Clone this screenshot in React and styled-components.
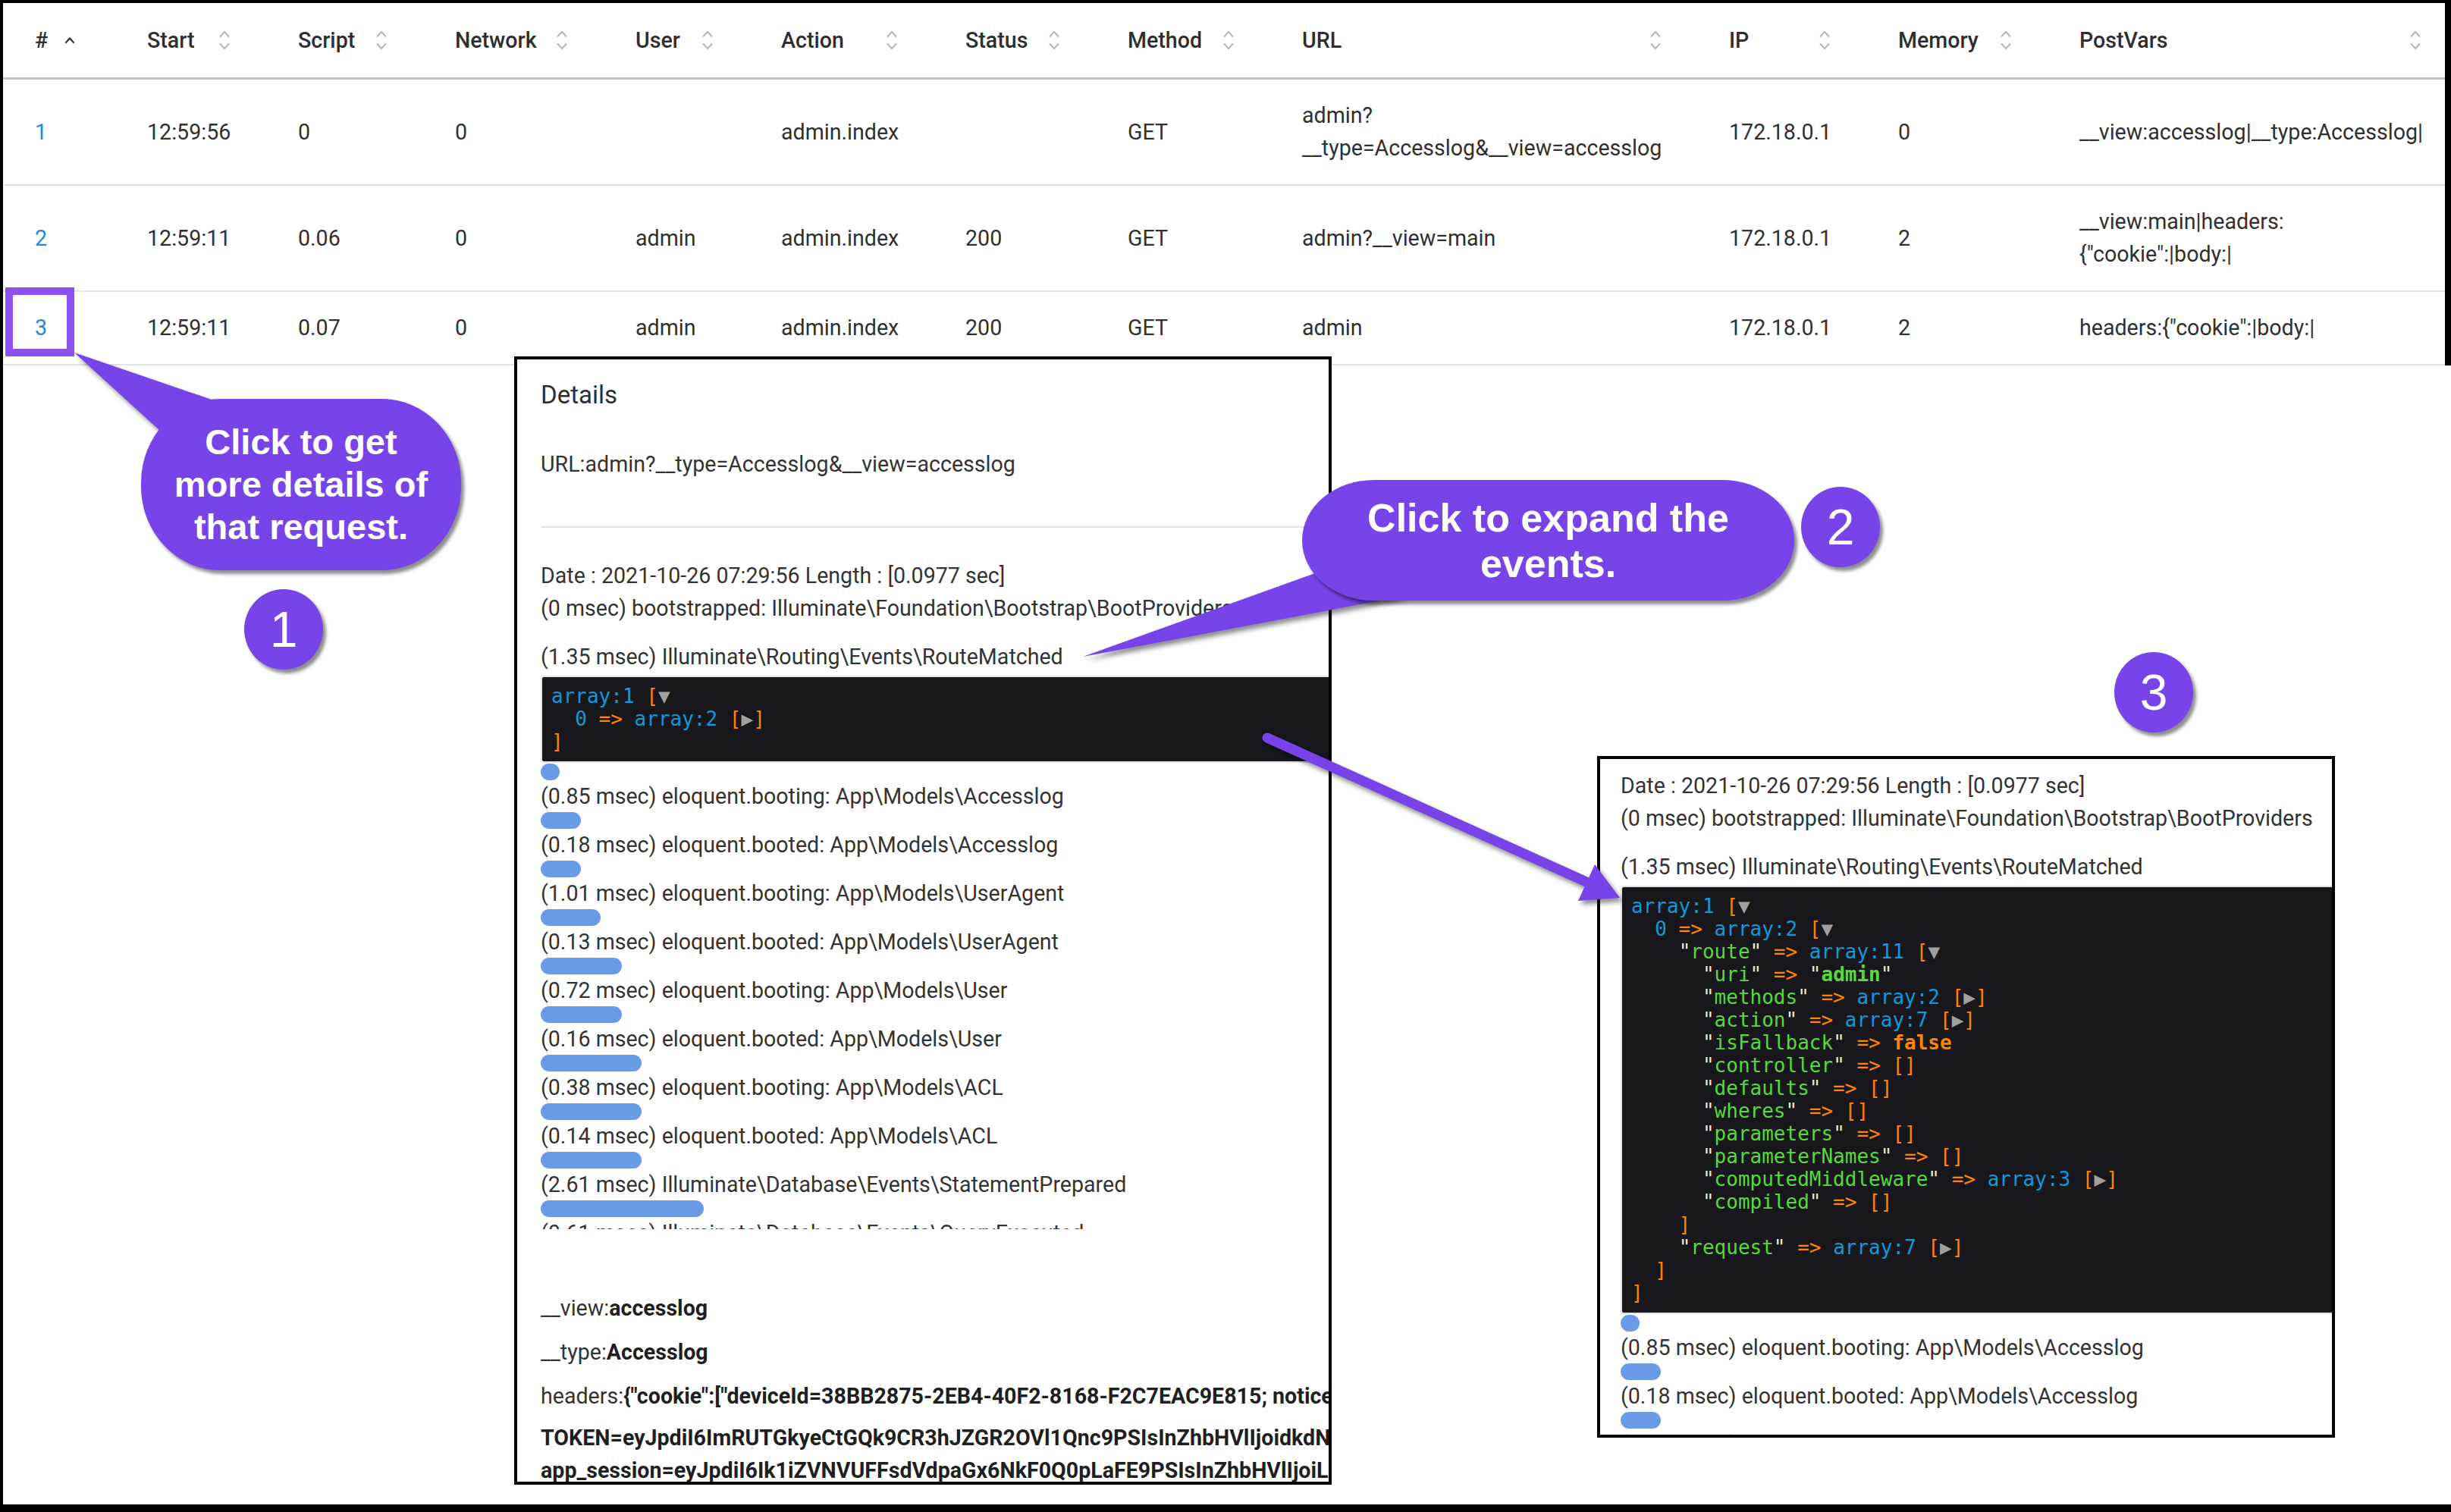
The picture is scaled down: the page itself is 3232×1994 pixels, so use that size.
import React from "react";
import styled, { createGlobalStyle } from "styled-components";

const PURPLE = "#7744ea";
const TEXT_SIZE = "28.6px";

const GlobalStyle = createGlobalStyle`
  html, body { margin: 0; padding: 0; background: #fff; }
  body { font-family: Roboto, "Liberation Sans", Arial, sans-serif; }
`;

const Frame = styled.div`
  position: relative;
  box-sizing: border-box;
  width: 3232px;
  height: 1994px;
  border-top: 4px solid #000;
  border-left: 4px solid #000;
  border-bottom: 10px solid #000;
  background: #fff;
  overflow: hidden;
`;

/* ---------- request table ---------- */

const COLS =
  "148px 199px 207px 238px 192px 243px 214px 230px 563px 223px 239px 540px";

const TableWrap = styled.div`
  width: 3220px;
  overflow: hidden;
  border-right: 8px solid #000;
`;

const HeadRow = styled.div`
  display: grid;
  grid-template-columns: ${COLS};
  height: 98px;
  border-bottom: 3px solid #c4c4c4;
`;

const HeadCell = styled.div`
  display: flex;
  align-items: center;
  justify-content: ${(p) => (p.$sorted ? "flex-start" : "space-between")};
  gap: 22px;
  padding: 0 48px 0 42px;
  font-size: ${TEXT_SIZE};
  font-weight: 500;
  color: #2e2e2e;
  white-space: nowrap;
`;

const Row = styled.div`
  display: grid;
  grid-template-columns: ${COLS};
  border-bottom: 2px solid #e2e2e2;
`;

const Cell = styled.div`
  display: flex;
  align-items: center;
  padding: 26px ${(p) => (p.$last ? "20px" : "42px")} 26px 42px;
  font-size: ${TEXT_SIZE};
  line-height: 43px;
  white-space: nowrap;
  color: ${(p) => (p.$link ? "#1e86e3" : "#303030")};
`;

const SortIcon = () => (
  <svg width="14" height="28" viewBox="0 0 14 28" fill="none" stroke="#b5b5b5"
    strokeWidth="2" strokeLinecap="round" strokeLinejoin="round">
    <polyline points="1.5,9 7,3 12.5,9" />
    <polyline points="1.5,19 7,25 12.5,19" />
  </svg>
);

const AscIcon = () => (
  <svg width="14" height="10" viewBox="0 0 14 10" fill="none" stroke="#333"
    strokeWidth="2.2" strokeLinecap="round" strokeLinejoin="round">
    <polyline points="2,8 7,2.5 12,8" />
  </svg>
);

const HEADERS = ["#", "Start", "Script", "Network", "User", "Action", "Status",
  "Method", "URL", "IP", "Memory", "PostVars"];

const ROWS = [
  {
    id: 1, start: "12:59:56", script: "0", network: "0", user: "", action: "admin.index",
    status: "", method: "GET", url: ["admin?", "__type=Accesslog&__view=accesslog"],
    ip: "172.18.0.1", memory: "0", post: ["__view:accesslog|__type:Accesslog|"],
  },
  {
    id: 2, start: "12:59:11", script: "0.06", network: "0", user: "admin", action: "admin.index",
    status: "200", method: "GET", url: ["admin?__view=main"],
    ip: "172.18.0.1", memory: "2", post: ["__view:main|headers:", "{\"cookie\":|body:|"],
  },
  {
    id: 3, start: "12:59:11", script: "0.07", network: "0", user: "admin", action: "admin.index",
    status: "200", method: "GET", url: ["admin"],
    ip: "172.18.0.1", memory: "2", post: ["headers:{\"cookie\":|body:|"],
  },
];

/* wrapped cell values: the lines break where the original column wrapped them */
const Lines = ({ parts }) => (
  <span>
    {parts.map((p, i) => (
      <React.Fragment key={i}>
        {i > 0 && <br />}
        {p}
      </React.Fragment>
    ))}
  </span>
);

const RequestTable = () => (
  <TableWrap>
    <HeadRow>
      {HEADERS.map((h, i) => (
        <HeadCell key={h} $sorted={i === 0}>
          <span>{h}</span>
          {i === 0 ? <AscIcon /> : <SortIcon />}
        </HeadCell>
      ))}
    </HeadRow>
    {ROWS.map((r) => (
      <Row key={r.id}>
        <Cell $link>{r.id}</Cell>
        <Cell>{r.start}</Cell>
        <Cell>{r.script}</Cell>
        <Cell>{r.network}</Cell>
        <Cell>{r.user}</Cell>
        <Cell>{r.action}</Cell>
        <Cell>{r.status}</Cell>
        <Cell>{r.method}</Cell>
        <Cell><Lines parts={r.url} /></Cell>
        <Cell>{r.ip}</Cell>
        <Cell>{r.memory}</Cell>
        <Cell $last><Lines parts={r.post} /></Cell>
      </Row>
    ))}
  </TableWrap>
);

/* ---------- event log (shared by the popup and the inset) ---------- */

const TOKEN_COLORS = {
  n: "#1299da",
  p: "#ff8400",
  g: "#a0a0a0",
  k: "#56db3a",
  s: "#56db3a",
  c: "#ff8400",
  q: "#ece7d2",
};

const Tok = styled.span`
  color: ${(p) => TOKEN_COLORS[p.$k]};
  font-weight: ${(p) => (p.$k === "s" || p.$k === "c" ? 700 : 400)};
`;

const Dump = styled.pre`
  margin: 4px -40px 0 0;
  padding: 10px 12px 11px;
  background: #18171b;
  border: 2px solid #e2e2e2;
  border-right: none;
  border-radius: 4px 0 0 4px;
  font-family: "DejaVu Sans Mono", "Liberation Mono", monospace;
  font-size: 26px;
  line-height: 30px;
  color: #ff8400;
  white-space: pre;
`;

const arr = (n, open) =>
  open
    ? [["n", `array:${n}`], ["p", " ["], ["g", "▼"]]
    : [["n", `array:${n}`], ["p", " ["], ["g", "▶"], ["p", "]"]];
const key = (ind, name, rest) => [
  ["p", " ".repeat(ind)], ["q", '"'], ["k", name], ["q", '"'], ["p", " => "], ...rest,
];
const EMPTY = [["p", "[]"]];

const DUMP_COLLAPSED = [
  arr(1, true),
  [["p", "  "], ["n", "0"], ["p", " => "], ...arr(2)],
  [["p", "]"]],
];

const DUMP_EXPANDED = [
  arr(1, true),
  [["p", "  "], ["n", "0"], ["p", " => "], ...arr(2, true)],
  key(4, "route", arr(11, true)),
  key(6, "uri", [["q", '"'], ["s", "admin"], ["q", '"']]),
  key(6, "methods", arr(2)),
  key(6, "action", arr(7)),
  key(6, "isFallback", [["c", "false"]]),
  key(6, "controller", EMPTY),
  key(6, "defaults", EMPTY),
  key(6, "wheres", EMPTY),
  key(6, "parameters", EMPTY),
  key(6, "parameterNames", EMPTY),
  key(6, "computedMiddleware", arr(3)),
  key(6, "compiled", EMPTY),
  [["p", "    ]"]],
  key(4, "request", arr(7)),
  [["p", "  ]"]],
  [["p", "]"]],
];

const DumpBlock = ({ lines }) => (
  <Dump>
    {lines.map((line, i) => (
      <div key={i}>
        {line.map(([k, t], j) => (
          <Tok key={j} $k={k}>{t}</Tok>
        ))}
      </div>
    ))}
  </Dump>
);

const LogLine = styled.div`
  font-size: ${TEXT_SIZE};
  line-height: ${(p) => (p.$date ? "44px" : "42px")};
  color: #333;
  white-space: nowrap;
`;

const Bar = styled.div`
  height: 22px;
  border-radius: 11px;
  background: #6a9be6;
  margin-top: ${(p) => (p.$afterDump ? "1px" : "0")};
`;

const EVENTS = [
  { text: "(0 msec) bootstrapped: Illuminate\\Foundation\\Bootstrap\\BootProviders", bar: 0 },
  { text: "(1.35 msec) Illuminate\\Routing\\Events\\RouteMatched", bar: 25, dump: true },
  { text: "(0.85 msec) eloquent.booting: App\\Models\\Accesslog", bar: 53 },
  { text: "(0.18 msec) eloquent.booted: App\\Models\\Accesslog", bar: 53 },
  { text: "(1.01 msec) eloquent.booting: App\\Models\\UserAgent", bar: 79 },
  { text: "(0.13 msec) eloquent.booted: App\\Models\\UserAgent", bar: 107 },
  { text: "(0.72 msec) eloquent.booting: App\\Models\\User", bar: 107 },
  { text: "(0.16 msec) eloquent.booted: App\\Models\\User", bar: 133 },
  { text: "(0.38 msec) eloquent.booting: App\\Models\\ACL", bar: 133 },
  { text: "(0.14 msec) eloquent.booted: App\\Models\\ACL", bar: 133 },
  { text: "(2.61 msec) Illuminate\\Database\\Events\\StatementPrepared", bar: 215 },
  { text: "(0.61 msec) Illuminate\\Database\\Events\\QueryExecuted", bar: 232 },
];

const EventLog = ({ expanded }) => (
  <div>
    <LogLine $date>Date : 2021-10-26 07:29:56 Length : [0.0977 sec]</LogLine>
    {EVENTS.map((e) => (
      <React.Fragment key={e.text}>
        <LogLine>{e.text}</LogLine>
        {e.dump && <DumpBlock lines={expanded ? DUMP_EXPANDED : DUMP_COLLAPSED} />}
        <Bar $afterDump={e.dump} style={{ width: e.bar }} />
      </React.Fragment>
    ))}
  </div>
);

/* ---------- details popup ---------- */

const DetailsPanel = styled.div`
  position: absolute;
  left: 674px;
  top: 466px;
  width: 1078px;
  height: 1488px;
  box-sizing: border-box;
  border: 4px solid #000;
  background: #fff;
  padding: 25px 0 0 31px;
  overflow: hidden;
  color: #333;
`;

const PanelTitle = styled.div`
  font-size: 33px;
  line-height: 44px;
  color: #2e2e2e;
`;

const UrlLine = styled.div`
  margin-top: 47px;
  font-size: ${TEXT_SIZE};
  line-height: 44px;
  white-space: nowrap;
`;

const Divider = styled.div`
  margin-top: 60px;
  height: 2px;
  background: #e3e3e3;
`;

const EventsViewport = styled.div`
  margin-top: 41px;
  height: 884px;
  overflow: hidden;
`;

const PostVars = styled.div`
  margin-top: 82px;
`;

const VarLine = styled.div`
  font-size: ${TEXT_SIZE};
  line-height: 44px;
  white-space: nowrap;
  margin-top: ${(p) => p.$gap || 0}px;
  b { font-weight: 700; color: #1f1f1f; }
`;

/* ---------- zoomed inset ---------- */

const InsetPanel = styled.div`
  position: absolute;
  left: 2102px;
  top: 993px;
  width: 973px;
  height: 899px;
  box-sizing: border-box;
  border: 4px solid #000;
  background: #fff;
  padding: 13px 0 0 27px;
  overflow: hidden;
`;

/* ---------- annotations ---------- */

const RowHighlight = styled.div`
  position: absolute;
  left: 3px;
  top: 375px;
  width: 91px;
  height: 91px;
  box-sizing: border-box;
  border: 10px solid #8a52ee;
`;

const AnnotationLayer = styled.svg`
  position: absolute;
  left: -4px;
  top: -4px;
  width: 3232px;
  height: 1994px;
  pointer-events: none;
  filter: drop-shadow(4px 5px 3px rgba(0, 0, 0, 0.45));
`;

const Bubble = styled.div`
  position: absolute;
  box-sizing: border-box;
  display: flex;
  align-items: center;
  justify-content: center;
  text-align: center;
  background: ${PURPLE};
  color: #fff;
  font-family: "Liberation Sans", Arial, sans-serif;
  font-weight: 700;
  box-shadow: 4px 5px 4px rgba(0, 0, 0, 0.45);
`;

const DetailsCallout = styled(Bubble)`
  left: 182px;
  top: 522px;
  width: 422px;
  height: 226px;
  border-radius: 105px / 110px;
  font-size: 47px;
  line-height: 56px;
`;

const ExpandCallout = styled(Bubble)`
  left: 1713px;
  top: 629px;
  width: 649px;
  height: 159px;
  border-radius: 95px / 80px;
  font-size: 52px;
  line-height: 60px;
`;

const StepBadge = styled.div`
  position: absolute;
  left: ${(p) => p.$x}px;
  top: ${(p) => p.$y}px;
  width: 104px;
  height: 106px;
  border-radius: 50%;
  background: ${PURPLE};
  color: #fff;
  display: flex;
  align-items: center;
  justify-content: center;
  font-family: "Liberation Sans", Arial, sans-serif;
  font-size: 66px;
  box-shadow: 4px 5px 4px rgba(0, 0, 0, 0.45);
`;

const Annotations = () => (
  <>
    <RowHighlight />
    <AnnotationLayer viewBox="0 0 3232 1994">
      <polygon points="98,465 282,528 222,578" fill={PURPLE} />
      <polygon points="1428,866 1745,752 1852,786" fill={PURPLE} />
      <line x1="1671" y1="973" x2="2094" y2="1164" stroke={PURPLE}
        strokeWidth="13" strokeLinecap="round" />
      <polygon points="2136,1184 2081,1188 2103,1140" fill={PURPLE} />
    </AnnotationLayer>
    <DetailsCallout>
      Click to get
      <br />
      more details of
      <br />
      that request.
    </DetailsCallout>
    <ExpandCallout>
      Click to expand the
      <br />
      events.
    </ExpandCallout>
    <StepBadge $x={318} $y={773}>1</StepBadge>
    <StepBadge $x={2371} $y={638}>2</StepBadge>
    <StepBadge $x={2784} $y={856}>3</StepBadge>
  </>
);

export default function App() {
  return (
    <>
      <GlobalStyle />
      <Frame>
        <RequestTable />
        <DetailsPanel>
          <PanelTitle>Details</PanelTitle>
          <UrlLine>URL:admin?__type=Accesslog&amp;__view=accesslog</UrlLine>
          <Divider />
          <EventsViewport>
            <EventLog />
          </EventsViewport>
          <PostVars>
            <VarLine>__view:<b>accesslog</b></VarLine>
            <VarLine $gap={14}>__type:<b>Accesslog</b></VarLine>
            <VarLine $gap={14}>
              headers:<b>{"{\"cookie\":[\"deviceId=38BB2875-2EB4-40F2-8168-F2C7EAC9E815; noticeBarClosed=1; XSRF-"}</b>
            </VarLine>
            <VarLine $gap={11}>
              <b>TOKEN=eyJpdiI6ImRUTGkyeCtGQk9CR3hJZGR2OVl1Qnc9PSIsInZhbHVlIjoidkdNRzVXbnE</b>
            </VarLine>
            <VarLine $gap={-1}>
              <b>app_session=eyJpdiI6Ik1iZVNVUFFsdVdpaGx6NkF0Q0pLaFE9PSIsInZhbHVlIjoiLzRwR</b>
            </VarLine>
          </PostVars>
        </DetailsPanel>
        <InsetPanel>
          <EventLog expanded />
        </InsetPanel>
        <Annotations />
      </Frame>
    </>
  );
}
